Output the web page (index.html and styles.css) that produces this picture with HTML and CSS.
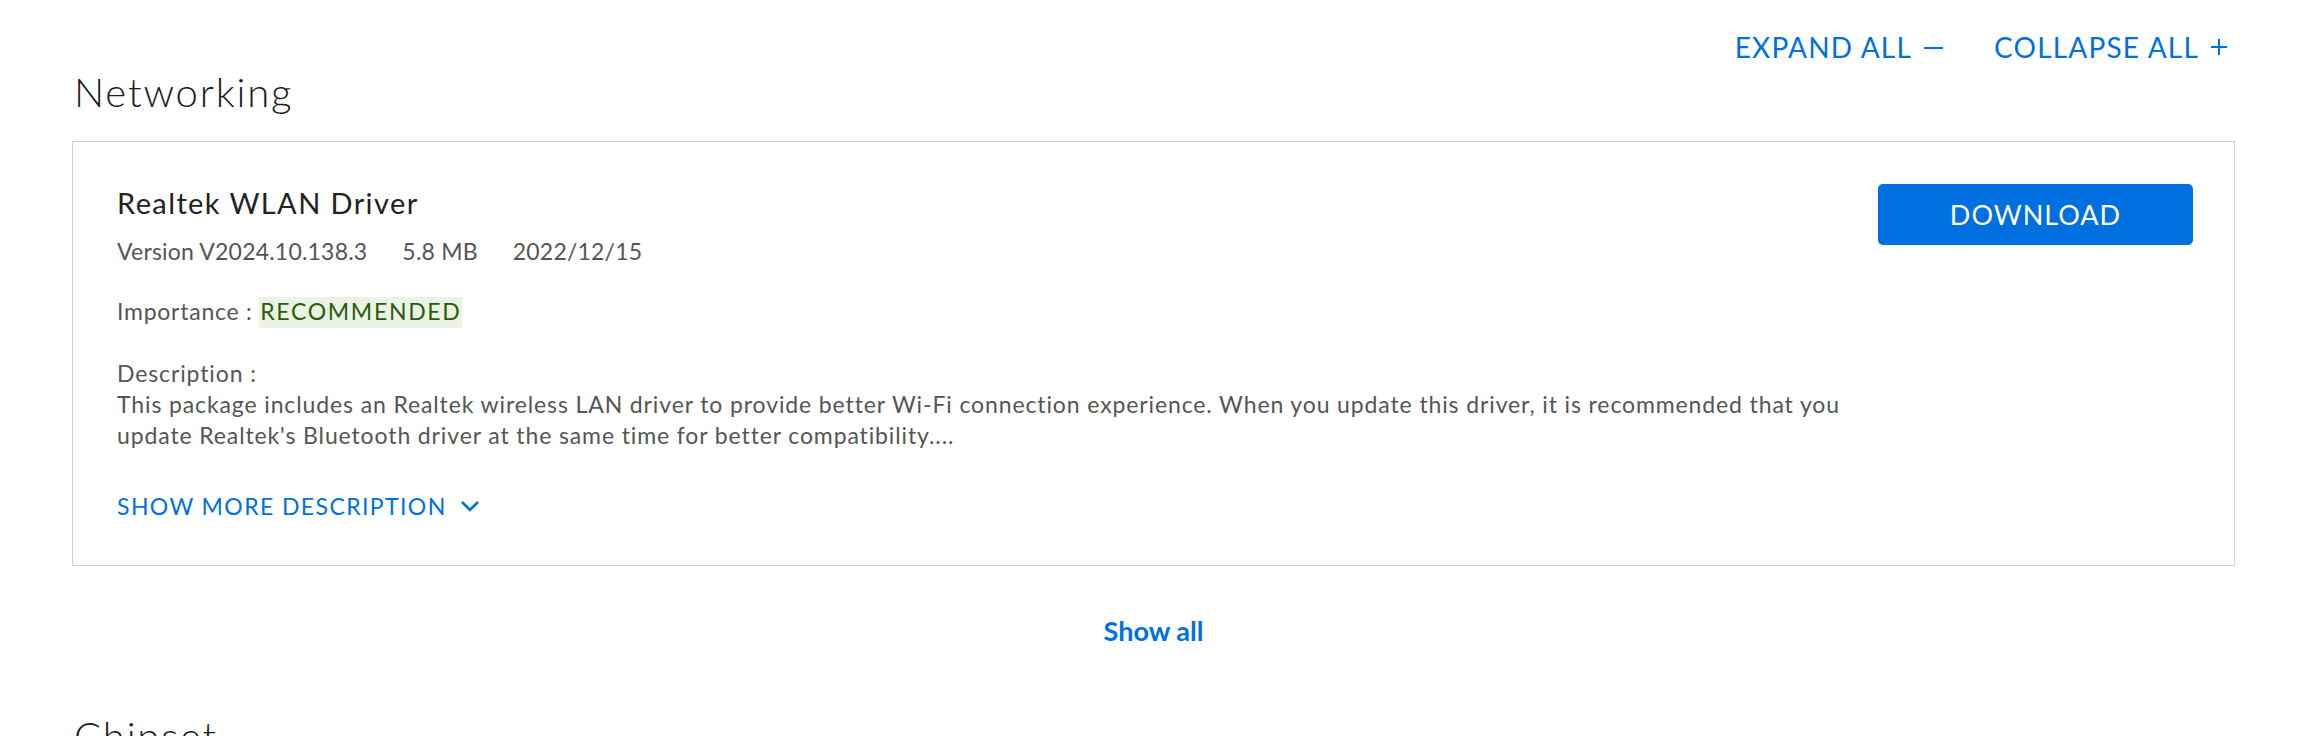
FILE: index.html
```html
<!DOCTYPE html>
<html lang="en">
<head>
    <meta charset="UTF-8">
    <meta name="viewport" content="width=device-width, initial-scale=1.0">
    <title>Drivers</title>
    <link rel="stylesheet" href="styles.css">
</head>
<body>

    <div class="page">
        <div class="toolbar">
            <a href="#" class="toggle">EXPAND ALL
                <svg class="sign" width="19" height="15" viewBox="0 0 19 15"><path d="M0 8h19" stroke="currentColor" stroke-width="2"/></svg>
            </a>
            <a href="#" class="toggle">COLLAPSE ALL
                <svg class="sign" width="16" height="16" viewBox="0 0 16 16"><path d="M0 8h16M8 0v16" stroke="currentColor" stroke-width="2"/></svg>
            </a>
        </div>

        <h2 class="category">Networking</h2>

        <div class="driver-card">
            <div class="driver-info">
                <h3 class="driver-name">Realtek WLAN Driver</h3>
                <div class="meta">
                    <span>Version V2024.10.138.3</span>
                    <span>5.8 MB</span>
                    <span>2022/12/15</span>
                </div>
                <div class="importance">Importance : <span class="badge">RECOMMENDED</span></div>
                <div class="description">
                    <div>Description :</div>
                    <p>This package includes an Realtek wireless LAN driver to provide better Wi-Fi connection experience. When you update this driver, it is recommended that you update Realtek's Bluetooth driver at the same time for better compatibility....</p>
                </div>
                <a href="#" class="show-more">SHOW MORE DESCRIPTION
                    <svg width="20" height="12" viewBox="0 0 20 12"><path d="M2 2l8 8 8-8" fill="none" stroke="currentColor" stroke-width="2.6"/></svg>
                </a>
            </div>
            <button class="download">DOWNLOAD</button>
        </div>

        <div class="show-all-row">
            <a href="#" class="show-all">Show all</a>
        </div>

        <h2 class="category chipset">Chipset</h2>
    </div>

</body>
</html>
```

FILE: styles.css
```css
body {
    font-family: Lato, "Open Sans", sans-serif;
    margin: 0;
    padding: 0;
    background-color: #fff;
    color: #222;
}

a {
    text-decoration: none;
    color: #0070e0;
}

.page {
    padding: 0 63px 0 72px;
}

/* expand / collapse links */
.toolbar {
    display: flex;
    justify-content: flex-end;
    gap: 51px;
    padding: 30px 8px 0 0;
    line-height: 34px;
}

.toggle {
    display: flex;
    align-items: center;
    gap: 12px;
    font-size: 28px;
    letter-spacing: 1.2px;
}

.category {
    font-size: 40px;
    font-weight: 300;
    letter-spacing: 1.8px;
    margin: 4px 0 0 2px;
    line-height: 48px;
    color: #1a1a1a;
}

.chipset {
    margin-top: 63px;
}

.driver-card {
    display: flex;
    align-items: flex-start;
    justify-content: space-between;
    margin-top: 25px;
    border: 1px solid #d0d0d0;
    padding: 42px 41px 43px 44px;
}

.driver-info {
    width: 1750px;
}

.driver-name {
    font-size: 29px;
    font-weight: 400;
    letter-spacing: 1.4px;
    line-height: 36px;
    margin: 1px 0 0;
    color: #222;
}

.meta {
    display: flex;
    gap: 35px;
    margin-top: 14px;
    font-size: 23px;
    letter-spacing: 0.2px;
    line-height: 32px;
    color: #555;
}

.importance {
    margin-top: 28px;
    font-size: 23px;
    letter-spacing: 0.75px;
    line-height: 32px;
    color: #555;
}

.badge {
    background-color: #ebf3e5;
    color: #2a5c0b;
    letter-spacing: 1.7px;
    padding: 0 0 3px 1px;
}

.description {
    margin-top: 31px;
    font-size: 23px;
    letter-spacing: 0.88px;
    line-height: 31px;
    color: #555;
}

.description p {
    margin: 0;
}

.show-more {
    display: inline-flex;
    align-items: center;
    gap: 13px;
    margin-top: 39px;
    font-size: 23px;
    letter-spacing: 1.4px;
    line-height: 32px;
}

.download {
    width: 315px;
    height: 61px;
    font-family: inherit;
    font-size: 27px;
    letter-spacing: 1px;
    color: white;
    background-color: #006fe0;
    border: none;
    border-radius: 5px;
    cursor: pointer;
}

.show-all-row {
    display: flex;
    justify-content: center;
    padding-top: 47px;
}

.show-all {
    font-size: 27px;
    font-weight: 700;
    line-height: 36px;
}
```
